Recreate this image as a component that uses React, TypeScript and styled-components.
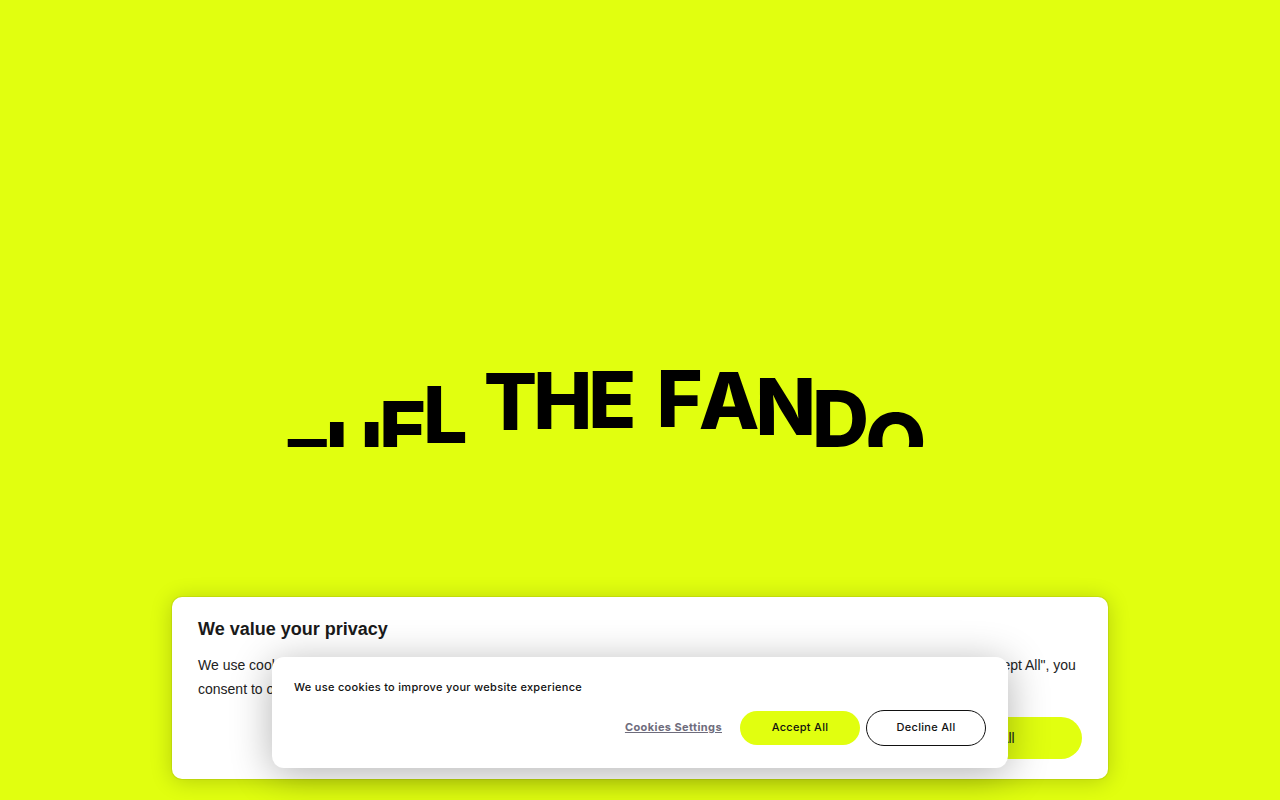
import styled, { createGlobalStyle } from "styled-components";

const GlobalStyle = createGlobalStyle`
    html, body {
        margin: 0;
        padding: 0;
        background: #e1ff0f;
        font-family: "Inter", "Liberation Sans", sans-serif;
        overflow: hidden;
    }
`;

// letter offsets (px below the resting line) — snapshot of the wave animation
const headline: { ch: string; offset: number; gap?: number }[] = [
    { ch: "F", offset: 69 },
    { ch: "U", offset: 52 },
    { ch: "E", offset: 31 },
    { ch: "L", offset: 16, gap: 20 },
    { ch: "T", offset: 3 },
    { ch: "H", offset: 2 },
    { ch: "E", offset: 1, gap: 24 },
    { ch: "F", offset: 0 },
    { ch: "A", offset: 2 },
    { ch: "N", offset: 8 },
    { ch: "D", offset: 20 },
    { ch: "O", offset: 43 },
    { ch: "M", offset: 90 },
];

function App() {
    return (
        <>
            <GlobalStyle />
            <Page>
                <Hero>
                    <Headline aria-label="FUEL THE FANDOM">
                        {headline.map((l, i) => (
                            <Letter key={i} $offset={l.offset} $gap={l.gap ?? 0}>
                                {l.ch}
                            </Letter>
                        ))}
                    </Headline>
                </Hero>

                <PrivacyCard>
                    <CardTitle>We value your privacy</CardTitle>
                    <CardText>
                        We use cookies to enhance your browsing experience, serve personalized ads or content, and
                        analyze our traffic. By clicking "Accept All", you consent to our use of cookies.
                    </CardText>
                    <CardActions>
                        <CardButton $primary={false}>Customize</CardButton>
                        <CardButton $primary={false}>Reject All</CardButton>
                        <CardButton $primary>Accept All</CardButton>
                    </CardActions>
                </PrivacyCard>

                <CookieBar>
                    <BarText>We use cookies to improve your website experience</BarText>
                    <BarActions>
                        <SettingsLink href="#">Cookies Settings</SettingsLink>
                        <PillButton $variant="fill">Accept All</PillButton>
                        <PillButton $variant="outline">Decline All</PillButton>
                    </BarActions>
                </CookieBar>
            </Page>
        </>
    );
}

const Page = styled.div`
    position: relative;
    width: 100%;
    height: 800px;
    background: #e1ff0f;
`;

const Hero = styled.section`
    display: flex;
    justify-content: center;
    padding-top: 359px;
    padding-right: 4px;
`;

const Headline = styled.h1`
    margin: 0;
    display: flex;
    align-items: flex-start;
    height: 88px;
    overflow: hidden;
    font-family: "Inter", "Liberation Sans", sans-serif;
    font-weight: 800;
    font-size: 79px;
    line-height: 1;
    letter-spacing: -4px;
    color: #000;
`;

const Letter = styled.span<{ $offset: number; $gap: number }>`
    display: inline-block;
    transform: translateY(${(p) => p.$offset}px);
    margin-right: ${(p) => p.$gap}px;
`;

const PrivacyCard = styled.div`
    position: absolute;
    left: 172px;
    bottom: 21px;
    width: 936px;
    height: 182px;
    box-sizing: border-box;
    padding: 21px 26px 20px 26px;
    background: #fff;
    border-radius: 10px;
    box-shadow: 0 0 0 1px rgba(0, 0, 0, 0.06), 0 2px 22px rgba(0, 0, 0, 0.2);
    font-family: "Liberation Sans", Arial, sans-serif;
    color: #1a1a1a;
`;

const CardTitle = styled.h2`
    margin: 0 0 13px;
    font-size: 18px;
    font-weight: 700;
    line-height: 22px;
`;

const CardText = styled.p`
    margin: 0;
    font-size: 14px;
    line-height: 24px;
    color: #222;
`;

const CardActions = styled.div`
    display: flex;
    justify-content: flex-end;
    gap: 12px;
    margin-top: 16px;
`;

const CardButton = styled.button<{ $primary: boolean }>`
    width: 196px;
    height: 42px;
    border-radius: 21px;
    border: none;
    background: ${(p) => (p.$primary ? "#e1ff0f" : "#fff")};
    font-family: "Liberation Sans", Arial, sans-serif;
    font-size: 14px;
    color: #222;
`;

const CookieBar = styled.div`
    position: absolute;
    left: 272px;
    bottom: 32px;
    width: 736px;
    height: 111px;
    box-sizing: border-box;
    padding: 23px 22px 22px 22px;
    display: flex;
    flex-direction: column;
    justify-content: space-between;
    background: #fff;
    border-radius: 12px;
    box-shadow: 0 6px 40px rgba(0, 0, 0, 0.3);
`;

const BarText = styled.p`
    margin: 0;
    font-family: "Inter", sans-serif;
    font-size: 11px;
    font-weight: 500;
    line-height: 14px;
    letter-spacing: 0.3px;
    color: #111;
`;

const BarActions = styled.div`
    display: flex;
    justify-content: flex-end;
    align-items: center;
    gap: 6px;
`;

const SettingsLink = styled.a`
    margin-right: 12px;
    padding-bottom: 3px;
    font-family: "Inter", sans-serif;
    font-size: 11px;
    font-weight: 700;
    letter-spacing: 0.4px;
    color: #6e6c7c;
    text-decoration: underline;
`;

const PillButton = styled.button<{ $variant: "fill" | "outline" }>`
    width: 120px;
    height: ${(p) => (p.$variant === "fill" ? 34 : 36)}px;
    box-sizing: border-box;
    padding: 0 0 3px;
    border-radius: 18px;
    border: ${(p) => (p.$variant === "fill" ? "none" : "1px solid #111")};
    background: ${(p) => (p.$variant === "fill" ? "#e1ff0f" : "#fff")};
    font-family: "Inter", sans-serif;
    font-size: 11px;
    font-weight: 500;
    letter-spacing: 0.3px;
    color: #111;
    cursor: pointer;
`;

export default App;
